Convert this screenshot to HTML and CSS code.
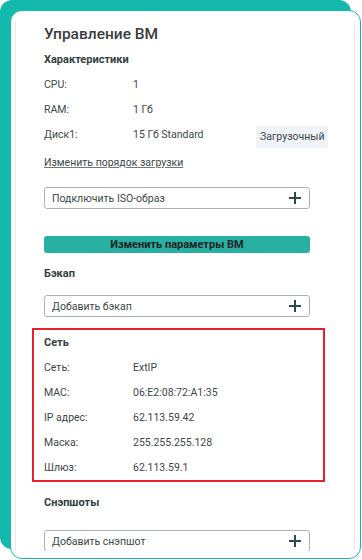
FILE: index.html
```
<!DOCTYPE html>
<html lang="ru">
<head>
    <meta charset="UTF-8">
    <meta name="viewport" content="width=device-width, initial-scale=1.0">
    <title>Управление ВМ</title>
    <link rel="stylesheet" href="styles.css">
</head>
<body>
    <div class="card">
        <div class="panel">
            <h1 class="title">Управление ВМ</h1>

            <h2 class="section-title spec-title">Характеристики</h2>
            <div class="row"><span class="label">CPU:</span><span class="value">1</span></div>
            <div class="row"><span class="label">RAM:</span><span class="value">1 Гб</span></div>
            <div class="row"><span class="label">Диск1:</span><span class="value">15 Гб Standard</span><span class="badge">Загрузочный</span></div>
            <a class="link" href="#">Изменить порядок загрузки</a>

            <div class="field iso-field">
                <span>Подключить ISO-образ</span>
                <svg class="plus" width="12" height="12" viewBox="0 0 12 12"><path d="M6 0v12M0 6h12" stroke="#2e4a4a" stroke-width="2"/></svg>
            </div>

            <button class="main-btn">Изменить параметры ВМ</button>

            <h2 class="section-title backup-title">Бэкап</h2>
            <div class="field backup-field">
                <span>Добавить бэкап</span>
                <svg class="plus" width="12" height="12" viewBox="0 0 12 12"><path d="M6 0v12M0 6h12" stroke="#2e4a4a" stroke-width="2"/></svg>
            </div>

            <div class="network">
                <h2 class="section-title net-title">Сеть</h2>
                <div class="row"><span class="label">Сеть:</span><span class="value">ExtIP</span></div>
                <div class="row"><span class="label">MAC:</span><span class="value">06:E2:08:72:A1:35</span></div>
                <div class="row"><span class="label">IP адрес:</span><span class="value">62.113.59.42</span></div>
                <div class="row"><span class="label">Маска:</span><span class="value">255.255.255.128</span></div>
                <div class="row"><span class="label">Шлюз:</span><span class="value">62.113.59.1</span></div>
            </div>

            <h2 class="section-title snap-title">Снэпшоты</h2>
            <div class="field snap-field">
                <span>Добавить снэпшот</span>
                <svg class="plus" width="12" height="12" viewBox="0 0 12 12"><path d="M6 0v12M0 6h12" stroke="#2e4a4a" stroke-width="2"/></svg>
            </div>
        </div>
    </div>
</body>
</html>
```
FILE: styles.css
```
body {
    margin: 0;
    background: #fff;
    font-family: Roboto, "Noto Sans", sans-serif;
    color: #3d4747;
}
.card {
    margin: 10px 0 0 10px;
    width: 351px;
    height: 549px;
    box-sizing: border-box;
    border: 1px solid #1cb5ab;
    border-radius: 12px;
    background: #fff;
    box-shadow: -10px -10px 0 #14b9ae;
    padding: 10px 0 0 4px;
}
.panel {
    width: 340px;
    height: 530px;
    box-sizing: border-box;
    border-left: 1px solid #e8e8e8;
    border-right: 1px solid #e8e8e8;
    padding: 3px 0 0 28px;
    overflow: hidden;
}
.title {
    margin: 0;
    font-size: 15.5px;
    line-height: 20px;
    font-weight: 500;
    color: #3a3c3d;
}
.section-title {
    margin: 0;
    font-size: 11px;
    line-height: 16px;
    font-weight: 700;
    color: #334040;
}
.spec-title {
    margin: 8px 0 4px;
}
.row {
    display: flex;
    align-items: center;
    height: 25px;
    font-size: 10.5px;
}
.label {
    width: 89px;
}
.value {
    width: 123px;
}
.badge {
    background: #eef4f8;
    padding: 4px 4px;
    line-height: 14px;
    margin-top: 4px;
}
.link {
    display: inline-block;
    margin-top: 8px;
    font-size: 10.5px;
    line-height: 16px;
    color: #3d4747;
    text-decoration: underline;
    text-decoration-color: #777;
}
.field {
    display: flex;
    justify-content: space-between;
    align-items: center;
    width: 266px;
    height: 22px;
    box-sizing: border-box;
    border: 1px solid #aab4b4;
    border-radius: 3px;
    padding: 0 8px 0 7px;
    font-size: 10.5px;
    color: #3d4747;
}
.iso-field {
    margin-top: 16px;
}
.main-btn {
    display: block;
    margin-top: 27px;
    width: 266px;
    height: 17px;
    padding: 0;
    border: 0;
    border-radius: 3px;
    background: #2aafa3;
    font-family: Roboto, "Noto Sans", sans-serif;
    font-size: 11px;
    font-weight: 700;
    color: #1d2424;
}
.backup-title {
    margin-top: 13px;
}
.backup-field {
    margin-top: 13px;
}
.network {
    margin: 11px 0 0 -12px;
    width: 293px;
    box-sizing: border-box;
    border: 2.5px solid #e8202e;
    padding: 5px 0 0 10px;
    height: 154px;
}
.net-title {
    margin-bottom: 4px;
}
.snap-title {
    margin-top: 13px;
}
.snap-field {
    margin-top: 19px;
}
```
